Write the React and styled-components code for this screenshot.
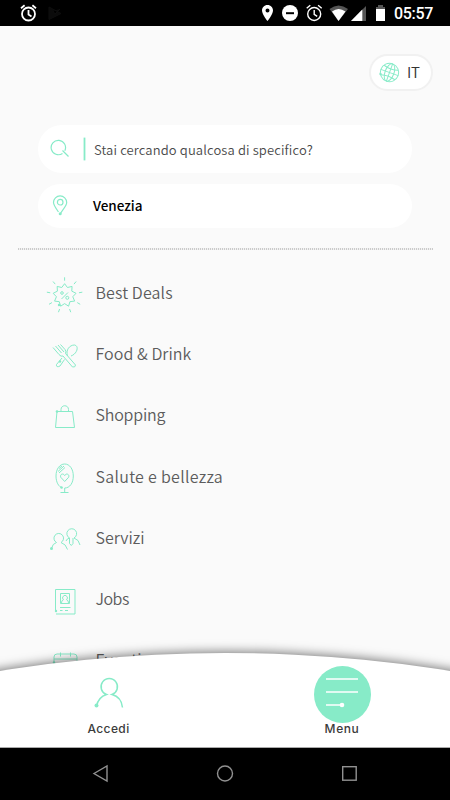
import React from "react";
import styled, { createGlobalStyle } from "styled-components";

const MINT = "#87ebc8";

const GlobalStyle = createGlobalStyle`
  * { box-sizing: border-box; }
  body { margin: 0; background: #fafafa; }
`;

const Screen = styled.div`
  display: flex;
  flex-direction: column;
  width: 450px;
  height: 800px;
  overflow: hidden;
  background: #fafafa;
  font-family: "Noto Sans CJK SC", "Noto Sans", sans-serif;
`;

const StatusBar = styled.header`
  display: flex;
  flex: none;
  justify-content: space-between;
  height: 26px;
  background: #000;
`;

const StatusGroup = styled.div`
  display: flex;
  height: 26px;
`;

const Clock = styled.time`
  width: 57px;
  padding-left: 1px;
  font: 500 16px/28px Roboto, sans-serif;
  letter-spacing: -0.3px;
  color: #fff;
`;

const Content = styled.main`
  display: flex;
  flex: 1;
  flex-direction: column;
  min-height: 0;
  overflow: hidden;
`;

const LanguageButton = styled.button`
  display: flex;
  flex: none;
  align-items: center;
  align-self: flex-end;
  width: 64px;
  height: 37px;
  margin: 28px 17px 0 0;
  padding: 0 0 1px 8px;
  border: 2px solid #f1f1f1;
  border-radius: 19px;
  background: #fff;
  color: #333;
  font: 400 15px/20px "Noto Sans CJK SC", sans-serif;
  font-weight: 350;
  letter-spacing: -0.3px;
  gap: 7px;
`;

const SearchForm = styled.section`
  display: flex;
  flex: none;
  flex-direction: column;
  gap: 11px;
  margin: 34px 38px 0;
`;

const Field = styled.div`
  display: flex;
  align-items: center;
  height: ${(p) => p.$height}px;
  padding-left: 12px;
  border-radius: 24px;
  background: #fff;
`;

const Cursor = styled.span`
  width: 1px;
  height: 22px;
  margin: 0 9px 0 14px;
  background: ${MINT};
  box-shadow: 0 0 0 0.4px ${MINT};
`;

const Placeholder = styled.span`
  padding-top: 1px;
  font-size: 13px;
  font-weight: 350;
  line-height: 20px;
  letter-spacing: ${(p) => p.$spacing}px;
  color: #4a4a4a;
`;

const Place = styled.span`
  margin-left: 23px;
  padding-bottom: 2px;
  font-size: 13.5px;
  font-weight: 500;
  line-height: 20px;
  letter-spacing: -0.05px;
  color: #000;
`;

const Divider = styled.hr`
  flex: none;
  width: 415px;
  height: 2px;
  margin: 20px 0 0 18px;
  border: 0;
  background: repeating-linear-gradient(90deg, #cbcbcb 0 1px, #f2f2f2 1px 2px);
`;

const Categories = styled.ul`
  flex: none;
  margin: 0;
  padding: 13px 0 0 46px;
  list-style: none;
`;

const Category = styled.li`
  display: flex;
  align-items: center;
  height: 61.2px;
`;

const CategoryIcon = styled.svg`
  flex: none;
  width: 38px;
  height: 40px;
  margin-right: 11.5px;
  overflow: visible;
  fill: none;
  stroke: ${MINT};
  stroke-width: 1;
`;

const CategoryName = styled.span`
  padding-bottom: 3px;
  font-size: 16px;
  font-weight: 350;
  line-height: 24px;
  letter-spacing: ${(p) => p.$spacing}px;
  white-space: nowrap;
  color: #5c5c5c;
`;

const TabBar = styled.nav`
  position: relative;
  z-index: 1;
  flex: none;
  height: 124px;
  margin-top: -124px;
  overflow: hidden;
  border-bottom: 1px solid #aaa;
`;

const Arch = styled.div`
  position: absolute;
  top: 29px;
  left: -1190px;
  width: 2830px;
  height: 2830px;
  border-radius: 50%;
  background: #fff;
  box-shadow: 0 -1px 11px 0 rgba(0, 0, 0, 0.55);
`;

const Tabs = styled.div`
  position: relative;
  display: grid;
  grid-template-columns: 217px 250px;
  padding-top: 42px;
`;

const Tab = styled.button`
  display: flex;
  flex-direction: column;
  align-items: center;
  height: 80px;
  padding: 0;
  border: 0;
  background: none;
  color: #3b3b3b;
`;

const TabIcon = styled.svg`
  flex: none;
  width: 57px;
  height: 57px;
`;

const TabLabel = styled.span`
  margin-top: -2px;
  font: 450 12px/16px Inter, sans-serif;
  letter-spacing: ${(p) => p.$spacing}px;
`;

const SystemNav = styled.footer`
  display: flex;
  flex: none;
  align-items: center;
  justify-content: space-between;
  height: 52px;
  padding: 0 90px 2px 90px;
  background: #000;
`;

const SystemIcon = styled.svg`
  width: 20px;
  height: 20px;
  fill: none;
  stroke: #919191;
  stroke-width: 1.4;
`;

const Alarm = ({ thin }) => (
  <g fill="none" stroke="#fff" strokeWidth={thin ? 1.4 : 1.8}>
    <circle cx="9" cy="10" r="6.5" />
    <path d="M9 6v4.4l3 2M1.5 4.2l3.6-3M16.5 4.2l-3.6-3" />
  </g>
);

const Dot = ({ x, y, r = 1.2 }) => <circle cx={x} cy={y} r={r} fill={MINT} stroke="none" />;

const starPoints = Array.from({ length: 18 }, (_, i) => {
  const a = -Math.PI / 2 + (i * Math.PI) / 9;
  const r = i % 2 ? 8.3 : 11.6;
  return `${18.6 + r * Math.cos(a)},${21.3 + r * Math.sin(a)}`;
}).join(" ");

const rays = Array.from({ length: 9 }, (_, i) => {
  const a = -Math.PI / 2 + (i * 2 * Math.PI) / 9;
  return `M${18.6 + 14.6 * Math.cos(a)} ${21.3 + 14.6 * Math.sin(a)}L${18.6 + 18 * Math.cos(a)} ${21.3 + 18 * Math.sin(a)}`;
}).join("");

const drawings = {
  deals: (
    <>
      <polygon points={starPoints} strokeLinejoin="round" />
      <path d={rays} />
      <path d="M22 18.5l-6.5 6.5" />
      <circle cx="16" cy="19" r="1.3" />
      <circle cx="21.3" cy="23.8" r="1.5" />
      <Dot x={13} y={31} />
    </>
  ),
  food: (
    <>
      <path d="M7 12.5l6 7q2 2.5 4 1.5l9.5 11q3 .5 3-2L19.5 18.5q1-2-.5-4l-4.500-5M9.500 11l6 7M12 10l6 7" />
      <path d="M21.500 21c-2-6 2-11 7-11 5 1 2.500 9-3.500 11M18.500 24.500l-4.500 6.500q-4 2-3.500-1.500l5.500-6.500" />
      <Dot x={14} y={26.5} />
    </>
  ),
  shopping: (
    <>
      <path d="M11 15.500L9.500 31.500h19L26.500 15.500H11M15 15.500v-2c0-5 7.500-5 7.500 0v2" />
      <Dot x={11} y={15.5} r={1.3} />
    </>
  ),
  beauty: (
    <>
      <path d="M16.500 30.800C12.500 30 10 25 10 19c0-7 3.800-12 8.700-12s8.600 5 8.600 12-3.500 12-8.600 12v4.500M14.500 35.500h8" />
      <path d="M18.700 24.500l-4-4.300c-1-3 2.500-4.500 4-1.600 1.500-2.900 5-1.400 4 1.600z" />
      <path d="M12 14.500l6-5.500M13 16l6-5.500M13 11.500l3-2.500" />
      <Dot x={15.5} y={30.5} />
    </>
  ),
  services: (
    <>
      <path d="M5.500 30.500q1-5 5-6a4.800 4.800 0 1 1 4.500 0q5 1.500 6.500 7" />
      <path d="M20 23q1-2.500 3.500-3a4.900 4.900 0 1 1 4.500 0q5 1.500 6 7M23.500 20v5.500l1.800 2 1.700-2V20" />
      <Dot x={5.5} y={30.5} r={1.5} />
    </>
  ),
  jobs: (
    <>
      <path d="M9.500 30V9.500h19.500V34H10M14.500 13.500h9v10h-9zM14 27.500h10.500M14 30.500h2.500M19 30.500h3" />
      <path d="M15.500 23q0-3 2-3.300a2.400 2.400 0 1 1 3 0q2 .3 2 3.300" />
      <Dot x={10} y={31} />
    </>
  ),
  events: (
    <>
      <path d="M8 21v-5q0-3 3-3h17q3 0 3 3V33H8V21M8 18h23M14.500 11.500v4M24.500 11.500v4" />
      <Dot x={8} y={21.5} />
    </>
  ),
};

const categories = [
  ["deals", "Best Deals", 0.12],
  ["food", "Food & Drink", 0.06],
  ["shopping", "Shopping", -0.2],
  ["beauty", "Salute e bellezza", 0.29],
  ["services", "Servizi", 0],
  ["jobs", "Jobs", -0.5],
  ["events", "Eventi", 0],
];

export default function App() {
  return (
    <Screen>
      <GlobalStyle />
      <StatusBar>
        <StatusGroup>
          <svg width="80" height="26">
            <g transform="translate(19.5 4)"><Alarm /></g>
            <path d="M49 7l12 6.5-12 6zM53 11l2 3 5-5" fill="#0b0b0b" stroke="#0e0e0e" />
          </svg>
        </StatusGroup>
        <StatusGroup>
          <svg width="135" height="26" viewBox="258 0 135 26">
            <path fillRule="evenodd" fill="#fff" d="M267.500 5c-3.300 0-5.500 2.500-5.500 5.500 0 4 5.500 10.500 5.500 10.500s5.500-6.500 5.500-10.500c0-3-2.200-5.500-5.500-5.500zm0 3.500a2 2 0 1 1 0 4 2 2 0 0 1 0-4z" />
            <circle cx="290" cy="13" r="8" fill="#fff" />
            <path d="M286 13.200h8" stroke="#000" strokeWidth="2" />
            <g transform="translate(305.200 4)"><Alarm thin /></g>
            <path d="M329.500 9q9-7 18.500 0l-9.500 12z" fill="#555" />
            <path d="M332 11.500q6.500-5 13.500 0L338.500 21z" fill="#fff" />
            <path d="M366 6v15h-15z" fill="#555" />
            <path d="M362.300 9.500V21H351z" fill="#fff" />
            <path d="M378 5h5v2h2v3h-9V7h2z" fill="#555" />
            <path d="M376 9h9v12h-9z" fill="#fff" />
          </svg>
          <Clock>05:57</Clock>
        </StatusGroup>
      </StatusBar>

      <Content>
        <LanguageButton>
          <svg width="21" height="21" fill="none" stroke={MINT} strokeWidth="1">
            <g transform="rotate(20 10.500 10.500)">
              <circle cx="10.5" cy="10.5" r="9.2" />
              <ellipse cx="10.5" cy="10.5" rx="4.5" ry="9.2" />
              <path d="M10.500 1.300v18.400M1.300 10.500h18.400M3 5.500q7.500 2.500 15 0M3 15.500q7.500-2.500 15 0" />
            </g>
            <Dot x={1.5} y={12} />
          </svg>
          IT
        </LanguageButton>

        <SearchForm>
          <Field $height={48}>
            <svg width="20" height="22" fill="none" stroke={MINT} strokeWidth="1.2">
              <path d="M12.500 15.400A7.200 7.200 0 1 1 14.800 12.700M12.500 12.500l6 6" />
            </svg>
            <Cursor />
            <Placeholder $spacing={0.13}>Stai cercando qualcosa di specifico?</Placeholder>
          </Field>
          <Field $height={44}>
            <svg width="20" height="24" fill="none" stroke={MINT} strokeWidth="1.2">
              <path d="M8.500 18C5 13 3.500 11 3.500 8.500a6.600 6.600 0 0 1 13.200 0C16.700 12 13 15 10.200 20" />
              <circle cx="10.2" cy="8.2" r="2.8" />
              <Dot x={10.2} y={19.8} r={1.5} />
            </svg>
            <Place>Venezia</Place>
          </Field>
        </SearchForm>

        <Divider />

        <Categories>
          {categories.map(([icon, name, spacing]) => (
            <Category key={icon}>
              <CategoryIcon viewBox="0 0 38 40">{drawings[icon]}</CategoryIcon>
              <CategoryName $spacing={spacing}>{name}</CategoryName>
            </Category>
          ))}
        </Categories>
      </Content>

      <TabBar>
        <Arch />
        <Tabs>
          <Tab>
            <TabIcon fill="none" stroke={MINT} strokeWidth="1.5">
              <path d="M16.500 40Q18.500 31 26.500 28.500A8.200 8.200 0 1 1 32 28.500Q41.500 31 42.500 41.500" />
              <Dot x={16.5} y={39.5} r={2} />
            </TabIcon>
            <TabLabel $spacing={0.4}>Accedi</TabLabel>
          </Tab>
          <Tab>
            <TabIcon>
              <circle cx="28.5" cy="28.5" r="28.5" fill={MINT} />
              <path d="M12 13h32M12 26h32M12 39H28" stroke="#fff" strokeWidth="1.6" />
              <circle cx="28" cy="39" r="2.3" fill="#fff" />
            </TabIcon>
            <TabLabel $spacing={0.6}>Menu</TabLabel>
          </Tab>
        </Tabs>
      </TabBar>

      <SystemNav>
        <SystemIcon><path d="M4 10.500l13-7.500v15z" /></SystemIcon>
        <SystemIcon><circle cx="10" cy="10.5" r="7.5" /></SystemIcon>
        <SystemIcon><rect x="2.7" y="3.7" width="13.5" height="13.5" /></SystemIcon>
      </SystemNav>
    </Screen>
  );
}
